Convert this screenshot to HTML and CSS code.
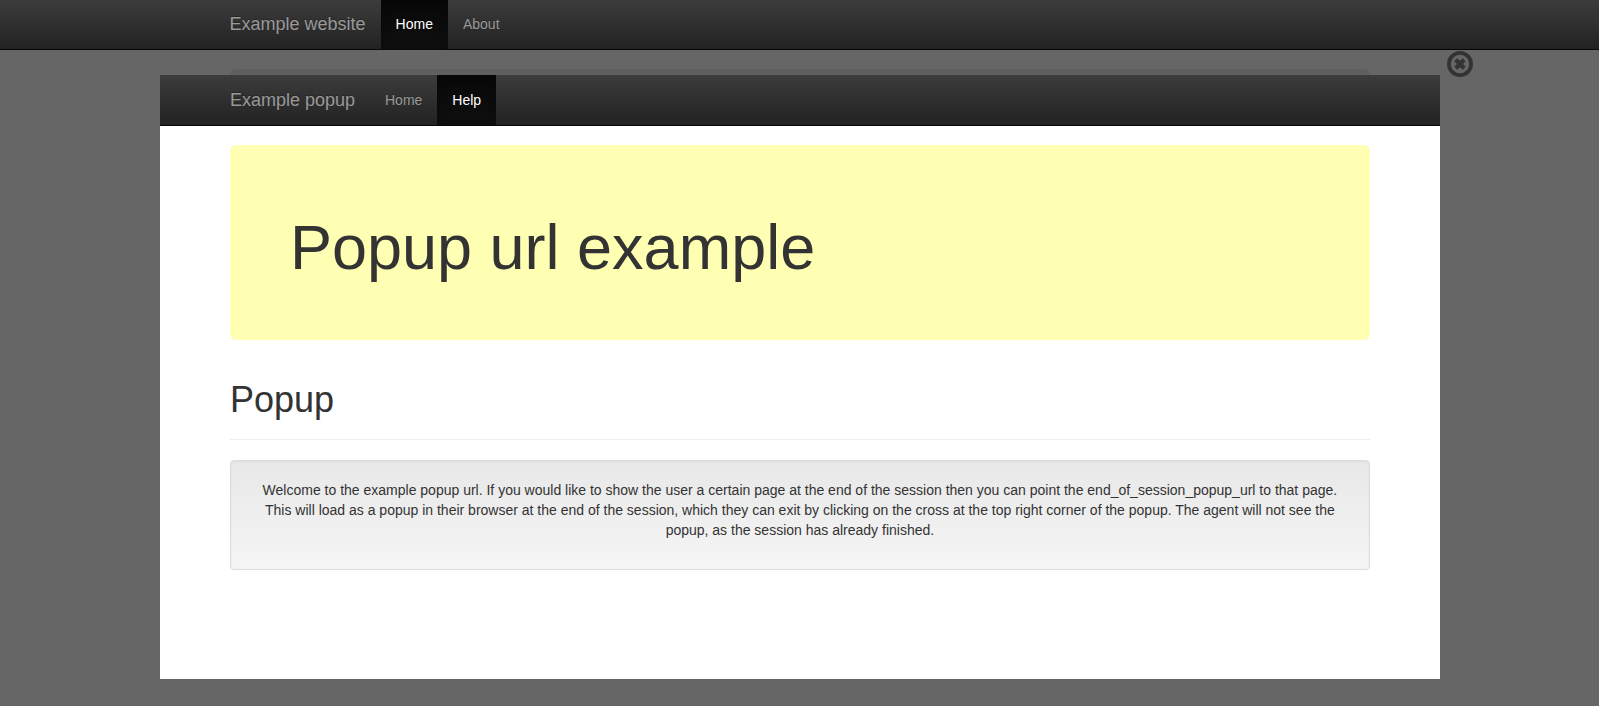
FILE: index.html
```html
<!DOCTYPE html>
<html lang="en">
<head>
<meta charset="utf-8">
<title>Example website</title>
<link rel="stylesheet" href="styles.css">
</head>
<body>
<header class="navbar navbar-top">
  <nav class="container nav-row" aria-label="Website">
    <a class="brand" href="#">Example website</a>
    <a class="nav-link active" href="#">Home</a>
    <a class="nav-link" href="#">About</a>
  </nav>
</header>
<div class="container page">
  <div class="jumbotron"></div>
</div>
<div class="overlay">
  <section class="popup" role="dialog" aria-label="Example popup">
    <header class="navbar">
      <nav class="container nav-row" aria-label="Popup">
        <a class="brand" href="#">Example popup</a>
        <a class="nav-link" href="#">Home</a>
        <a class="nav-link active" href="#">Help</a>
      </nav>
    </header>
    <main class="container content">
      <div class="jumbotron highlight">
        <h1 class="hero-title">Popup url example</h1>
      </div>
      <div class="page-header">
        <h1 class="page-title">Popup</h1>
      </div>
      <div class="well">
        <p class="message">Welcome to the example popup url. If you would like to show the user a certain page at the end of the session then you can point the end_of_session_popup_url to that page.<br>This will load as a popup in their browser at the end of the session, which they can exit by clicking on the cross at the top right corner of the popup. The agent will not see the<br>popup, as the session has already finished.</p>
      </div>
    </main>
  </section>
  <button class="close" type="button" aria-label="Close popup">
    <svg class="close-icon" viewBox="0 0 26 26" aria-hidden="true">
      <circle cx="13" cy="13" r="11.1" fill="none" stroke="#333" stroke-width="3.8"/>
      <path d="M10.2 7.2 13 9.8 15.8 7.2 18.6 10.2 16.2 13 18.6 15.8 15.8 18.8 13 16.2 10.2 18.8 7.2 15.8 9.8 13 7.2 10.2Z" fill="#333"/>
    </svg>
  </button>
</div>
</body>
</html>
```

FILE: styles.css
```css
* {
  box-sizing: border-box;
}

body {
  margin: 0;
  font: 14px/20px "Liberation Sans", Helvetica, Arial, sans-serif;
  color: #333;
  background: #fff;
}

.container {
  width: 100%;
  max-width: 1170px;
  margin: 0 auto;
  padding: 0 15px;
}

.navbar {
  background: linear-gradient(#3c3c3c, #222);
  border-bottom: 1px solid #080808;
}

.navbar-top {
  position: fixed;
  top: 0;
  left: 0;
  right: 0;
  z-index: 2;
}

.nav-row {
  display: flex;
}

.brand,
.nav-link {
  padding: 15px;
  color: #999;
  text-decoration: none;
  text-shadow: 0 -1px 0 rgba(0, 0, 0, 0.25);
}

.brand {
  padding-left: 0;
  font-size: 18px;
}

.navbar-top .brand,
.navbar-top .nav-link {
  padding-top: 14px;
}

.nav-link.active {
  color: #fff;
  background: linear-gradient(#080808, #0f0f0f);
  box-shadow: inset 0 3px 9px rgba(0, 0, 0, 0.25);
}

.page {
  padding-top: 69px;
}

.jumbotron {
  min-height: 195px;
  margin-bottom: 30px;
  padding: 68px 60px 58px;
  border-radius: 6px;
  background: #eee;
}

.highlight {
  background: #ffffb3;
}

.overlay {
  position: fixed;
  inset: 0;
  z-index: 1;
  background: rgba(0, 0, 0, 0.6);
}

.popup {
  position: absolute;
  top: 75px;
  bottom: 27px;
  left: 10%;
  width: 1280px;
  width: round(up, 80%, 1px);
  overflow: auto;
  background: #fff;
}

.content {
  padding-top: 19px;
}

.hero-title {
  margin: 0;
  font-size: 63px;
  line-height: 69px;
  font-weight: 400;
}

.page-header {
  margin: 40px 0 20px;
  padding-bottom: 19px;
  border-bottom: 1px solid #eee;
}

.page-title {
  margin: 0;
  font-size: 36px;
  line-height: 40px;
  font-weight: 400;
}

.well {
  padding: 19px 0;
  border: 1px solid #dcdcdc;
  border-radius: 4px;
  background: linear-gradient(#e8e8e8, #f5f5f5);
  box-shadow: inset 0 1px 3px rgba(0, 0, 0, 0.05), 0 1px 0 rgba(255, 255, 255, 0.1);
}

.message {
  margin: 0 0 10px;
  text-align: center;
}

.close {
  position: absolute;
  top: 51px;
  left: calc(90% + 8px);
  width: 26px;
  height: 26px;
  padding: 0;
  border: 0;
  background: none;
  cursor: pointer;
}

.close-icon {
  display: block;
  width: 26px;
  height: 26px;
}
```
